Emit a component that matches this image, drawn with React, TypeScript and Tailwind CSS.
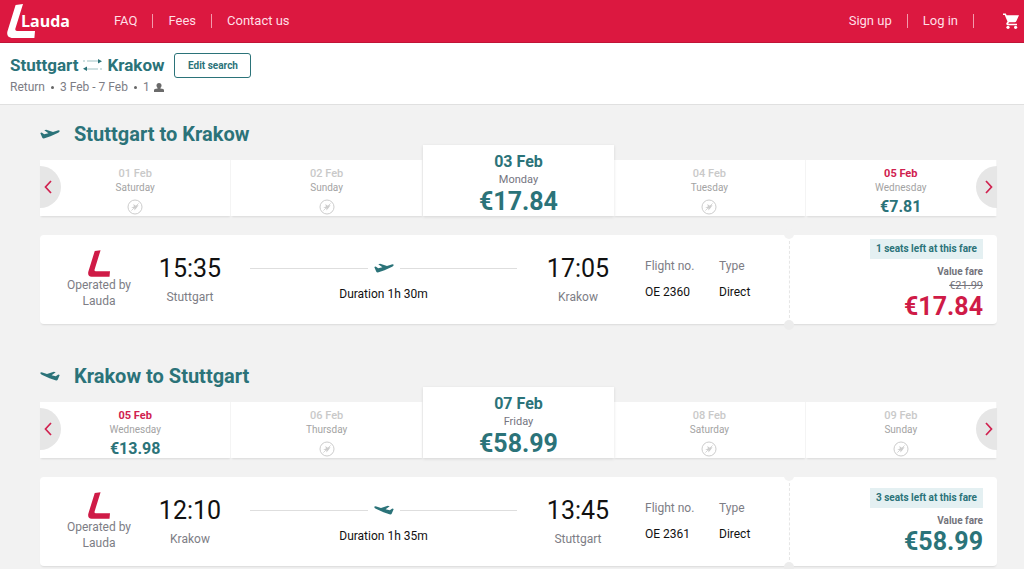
import clsx from "clsx";

type Day = {
  date: string;
  weekday: string;
  price?: string;
  state: "empty" | "available" | "selected";
};

type Flight = {
  id: string;
  from: string;
  to: string;
  direction: "out" | "back";
  days: Day[];
  departs: string;
  arrives: string;
  duration: string;
  number: string;
  seats: string;
  oldPrice?: string;
  price: string;
};

const flights: Flight[] = [
  {
    id: "outbound",
    from: "Stuttgart",
    to: "Krakow",
    direction: "out",
    days: [
      { date: "01 Feb", weekday: "Saturday", state: "empty" },
      { date: "02 Feb", weekday: "Sunday", state: "empty" },
      { date: "03 Feb", weekday: "Monday", price: "€17.84", state: "selected" },
      { date: "04 Feb", weekday: "Tuesday", state: "empty" },
      { date: "05 Feb", weekday: "Wednesday", price: "€7.81", state: "available" },
    ],
    departs: "15:35",
    arrives: "17:05",
    duration: "Duration 1h 30m",
    number: "OE 2360",
    seats: "1 seats left at this fare",
    oldPrice: "€21.99",
    price: "€17.84",
  },
  {
    id: "inbound",
    from: "Krakow",
    to: "Stuttgart",
    direction: "back",
    days: [
      { date: "05 Feb", weekday: "Wednesday", price: "€13.98", state: "available" },
      { date: "06 Feb", weekday: "Thursday", state: "empty" },
      { date: "07 Feb", weekday: "Friday", price: "€58.99", state: "selected" },
      { date: "08 Feb", weekday: "Saturday", state: "empty" },
      { date: "09 Feb", weekday: "Sunday", state: "empty" },
    ],
    departs: "12:10",
    arrives: "13:45",
    duration: "Duration 1h 35m",
    number: "OE 2361",
    seats: "3 seats left at this fare",
    price: "€58.99",
  },
];

function LaudaMark({ className }: { className: string }) {
  return (
    <svg viewBox="0 0 28 34" className={className} fill="currentColor" aria-hidden="true">
      <path d="M8.600 1 L16 0 L8.400 24.600 Q7.800 27 10 27 L28 27 L27.400 34 L4.600 34 Q-0.8 33.2 0.4 27.4 Z" />
    </svg>
  );
}

function Plane({ direction }: { direction: "out" | "back" }) {
  return (
    <svg
      viewBox="0 0 20 12"
      className={clsx("h-3 w-5 text-[#2b7379]", direction === "back" && "-scale-x-100")}
      fill="currentColor"
      aria-hidden="true"
    >
      <path d="M0.3 5 L1.700 4.400 L4.200 6.300 L8.400 5.300 L4.300 2.300 L6.200 1.700 L13 3.900 L17.600 2.400 Q19.300 2 19.700 2.800 Q19.900 3.900 18.200 4.700 L10.500 8.300 L4.600 10.300 Q2.800 10.800 2.200 9.500 Z" />
    </svg>
  );
}

function NoFlight() {
  return (
    <svg viewBox="0 0 16 16" className="mt-1 size-4 text-[#cdcdcd]" fill="none" stroke="currentColor" role="img" aria-label="No flights">
      <circle cx="8" cy="8" r="7" strokeWidth="1" />
      <path d="M4.2 8.4 L7 7.600 L6.2 5 L8.8 6.800 L11.600 6 L9.8 8.8 L7.4 11.400 L7.4 9.200 Z" fill="currentColor" stroke="none" />
      <path d="M4.4 11.6 L11.6 4.4" strokeWidth="0.8" />
    </svg>
  );
}

function Arrow({ side, label }: { side: "left" | "right"; label: string }) {
  return (
    <button
      type="button"
      aria-label={label}
      className={clsx(
        "absolute bottom-2 flex h-[42px] w-[21px] items-center bg-[#e6e6e6] text-[#d0214f]",
        side === "left" ? "left-0 justify-start rounded-r-full pl-1" : "right-0 justify-end rounded-l-full pr-1",
      )}
    >
      <svg viewBox="0 0 8 14" className="h-3.5 w-2" fill="none" stroke="currentColor" strokeWidth="1.7" aria-hidden="true">
        <path d={side === "left" ? "M7 1 L1.5 7 L7 13" : "M1 1 L6.5 7 L1 13"} />
      </svg>
    </button>
  );
}

function DayCell({ day }: { day: Day }) {
  if (day.state === "selected") {
    return (
      <button
        type="button"
        aria-pressed="true"
        className="z-10 flex h-[71px] flex-col items-center bg-white pt-[7px] shadow-[0_1px_3px_rgba(0,0,0,0.12)]"
      >
        <span className="text-base leading-5 font-bold text-[#2b7379]">{day.date}</span>
        <span className="text-[11px] leading-4 text-[#75757f]">{day.weekday}</span>
        <span className="text-[25px] leading-7 font-bold text-[#2b7379]">{day.price}</span>
      </button>
    );
  }
  const empty = day.state === "empty";
  return (
    <button
      type="button"
      disabled={empty}
      className="flex h-14 flex-col items-center border-r border-[#f5f5f5] bg-white pt-[7px] shadow-[0_2px_2px_-1px_rgba(0,0,0,0.1)]"
    >
      <span className={clsx("text-[11px] leading-[14px]", empty ? "font-medium text-[#c9c9c9]" : "font-bold text-[#d0214f]")}>
        {day.date}
      </span>
      <span className="text-[10px] leading-[14px] text-[#a3a3a3]">{day.weekday}</span>
      {empty ? <NoFlight /> : <span className="mt-0.5 text-base leading-5 font-bold text-[#2b7379]">{day.price}</span>}
    </button>
  );
}

function Stop({ time, city }: { time: string; city: string }) {
  return (
    <div className="flex flex-col items-center pt-[18px]">
      <span className="text-[25px] leading-8 text-[#111111]">{time}</span>
      <span className="mt-1 text-xs leading-4 text-[#7d7d85]">{city}</span>
    </div>
  );
}

function Detail({ label, value }: { label: string; value: string }) {
  return (
    <div className="flex flex-col gap-2.5 pt-[23px] text-xs leading-4">
      <dt className="text-[#7d7d85]">{label}</dt>
      <dd className="text-[#111111]">{value}</dd>
    </div>
  );
}

function FlightCard({ flight }: { flight: Flight }) {
  return (
    <article className="mt-[19px] flex h-[89px]">
      <div className="grid flex-1 grid-cols-[118fr_64fr_323fr_66fr_34fr_74fr_70fr] rounded-sm bg-white shadow-[0_2px_2px_-1px_rgba(0,0,0,0.1)]">
        <div className="flex flex-col items-center pt-[15px] text-xs leading-4 text-[#7d7d85]">
          <LaudaMark className="h-[27px] w-[22px] text-[#cf1b47]" />
          <span>Operated by</span>
          <span>Lauda</span>
        </div>
        <Stop time={flight.departs} city={flight.from} />
        <div className="flex flex-col px-7 pt-[27px] text-center">
          <div className="flex items-center gap-1.5">
            <span className="h-px flex-1 bg-[#dedede]" />
            <Plane direction={flight.direction} />
            <span className="h-px flex-1 bg-[#dedede]" />
          </div>
          <span className="mt-3 text-xs leading-4 text-[#111111]">{flight.duration}</span>
        </div>
        <Stop time={flight.arrives} city={flight.to} />
        <dl className="col-span-3 grid grid-cols-[34fr_74fr_70fr]">
          <div className="col-start-2">
            <Detail label="Flight no." value={flight.number} />
          </div>
          <Detail label="Type" value="Direct" />
        </dl>
      </div>
      <div className="relative flex w-[208px] flex-col items-end justify-center rounded-sm bg-white pr-3.5 shadow-[0_2px_2px_-1px_rgba(0,0,0,0.1)]">
        <span className="absolute inset-y-1.5 left-0 border-l border-dashed border-[#e6e6e6]" />
        <span className="absolute -top-1.5 -left-[5px] size-2.5 rounded-full bg-[#f2f2f2]" />
        <span className="absolute -bottom-1.5 -left-[5px] size-2.5 rounded-full bg-[#ececec]" />
        <span className="mb-1.5 bg-[#e4f0f2] px-1.5 text-[10px] leading-5 font-bold text-[#2b7379]">{flight.seats}</span>
        <span className="text-[10px] leading-[14px] font-bold text-[#73737b]">Value fare</span>
        {flight.oldPrice && <s className="text-[11px] leading-[14px] text-[#73737b]">{flight.oldPrice}</s>}
        <strong
          className={clsx("text-[25px] leading-7 font-bold", flight.oldPrice ? "text-[#cf1b47]" : "text-[#2b7379]")}
        >
          {flight.price}
        </strong>
      </div>
    </article>
  );
}

function FlightSection({ flight }: { flight: Flight }) {
  return (
    <section aria-labelledby={flight.id} className="mb-9 last:mb-0">
      <div className="flex h-8 items-center gap-3.5">
        <Plane direction={flight.direction} />
        <h2 id={flight.id} className="text-xl leading-6 font-bold text-[#2b7379]">
          {flight.from} to {flight.to}
        </h2>
      </div>
      <div className="relative -mt-[5px]">
        <div className="grid grid-cols-5 items-end">
          {flight.days.map((day) => (
            <DayCell key={day.date} day={day} />
          ))}
        </div>
        <Arrow side="left" label="Earlier dates" />
        <Arrow side="right" label="Later dates" />
      </div>
      <FlightCard flight={flight} />
    </section>
  );
}

export default function App() {
  return (
    <div className="min-h-screen bg-[#f2f2f2] font-['Roboto','Liberation_Sans',sans-serif]">
      <header className="flex h-[43px] items-center border-b border-[#c01437] bg-[#dc1840] pr-1 pl-[7px] text-[13px] text-[#ffdfe5]">
        <a href="#home" className="flex w-[92px] items-center text-white">
          <LaudaMark className="h-[34px] w-7" />
          <span className="-ml-3.5 font-['Open_Sans',sans-serif] text-base font-bold">Lauda</span>
        </a>
        <nav className="flex flex-1 items-center pl-[15px]">
          <a href="#faq">FAQ</a>
          <span className="mx-[15px] h-3.5 w-px bg-[#f39aac]" />
          <a href="#fees">Fees</a>
          <span className="mx-[15px] h-3.5 w-px bg-[#f39aac]" />
          <a href="#contact">Contact us</a>
          <a href="#signup" className="ml-auto">Sign up</a>
          <span className="mx-[15px] h-3.5 w-px bg-[#f39aac]" />
          <a href="#login">Log in</a>
          <span className="mr-[29px] ml-[15px] h-3.5 w-px bg-[#f39aac]" />
          <a href="#cart" aria-label="Basket" className="text-white">
            <svg viewBox="0 0 17 16" className="h-4 w-[17px]" fill="currentColor" aria-hidden="true">
              <path d="M0 0.500 H2.800 L3.600 2.300 H16 L13.300 8.200 Q12.800 9.200 11.800 9.200 H6 L5.200 10.700 H14 V12.300 H4.600 Q2.700 12 3.500 10.100 L4.500 8.400 L1.700 2.100 H0 Z" />
              <circle cx="5" cy="14.300" r="1.600" />
              <circle cx="12.600" cy="14.300" r="1.600" />
            </svg>
          </a>
        </nav>
      </header>

      <div className="h-[62px] border-b border-[#e0e0e0] bg-white pl-2.5">
        <div className="flex items-start gap-2.5 pt-2.5">
          <div>
            <h1 className="flex items-center gap-1 text-[17px] leading-6 font-bold text-[#2b7379]">
              Stuttgart
              <svg viewBox="0 0 21 12" className="h-3 w-[21px]" fill="none" stroke="currentColor" strokeWidth="1" role="img" aria-label="and back to">
                <path d="M1 2 H3 M5 2 H17" strokeOpacity="0.45" />
                <path d="M20 10 H18 M16 10 H4" strokeOpacity="0.45" />
                <path d="M16 0 L20 2.200 L16 4.400 Z M5 7.600 L1 9.800 L5 12 Z" fill="currentColor" stroke="none" />
              </svg>
              Krakow
            </h1>
            <p className="flex items-center text-xs leading-5 text-[#7d7d85]">
              Return
              <span className="mx-1.5 size-[3px] rounded-full bg-[#666666]" />3 Feb - 7 Feb
              <span className="mx-1.5 size-[3px] rounded-full bg-[#666666]" />1
              <svg viewBox="0 0 10 9" className="ml-1 h-[9px] w-2.5 text-[#6b6b6b]" fill="currentColor" role="img" aria-label="passenger">
                <circle cx="5" cy="2.500" r="2.500" />
                <path d="M0 9 V7.200 Q0 5.800 3.600 5.600 V4 H6.400 V5.600 Q10 5.800 10 7.200 V9 Z" />
              </svg>
            </p>
          </div>
          <button type="button" className="h-[25px] w-[77px] rounded-[3px] border border-[#2b7379] text-[10px] font-bold text-[#2b7379]">
            Edit search
          </button>
        </div>
      </div>

      <main className="pt-[13px] pr-[27px] pl-10">
        {flights.map((flight) => (
          <FlightSection key={flight.id} flight={flight} />
        ))}
      </main>
    </div>
  );
}
